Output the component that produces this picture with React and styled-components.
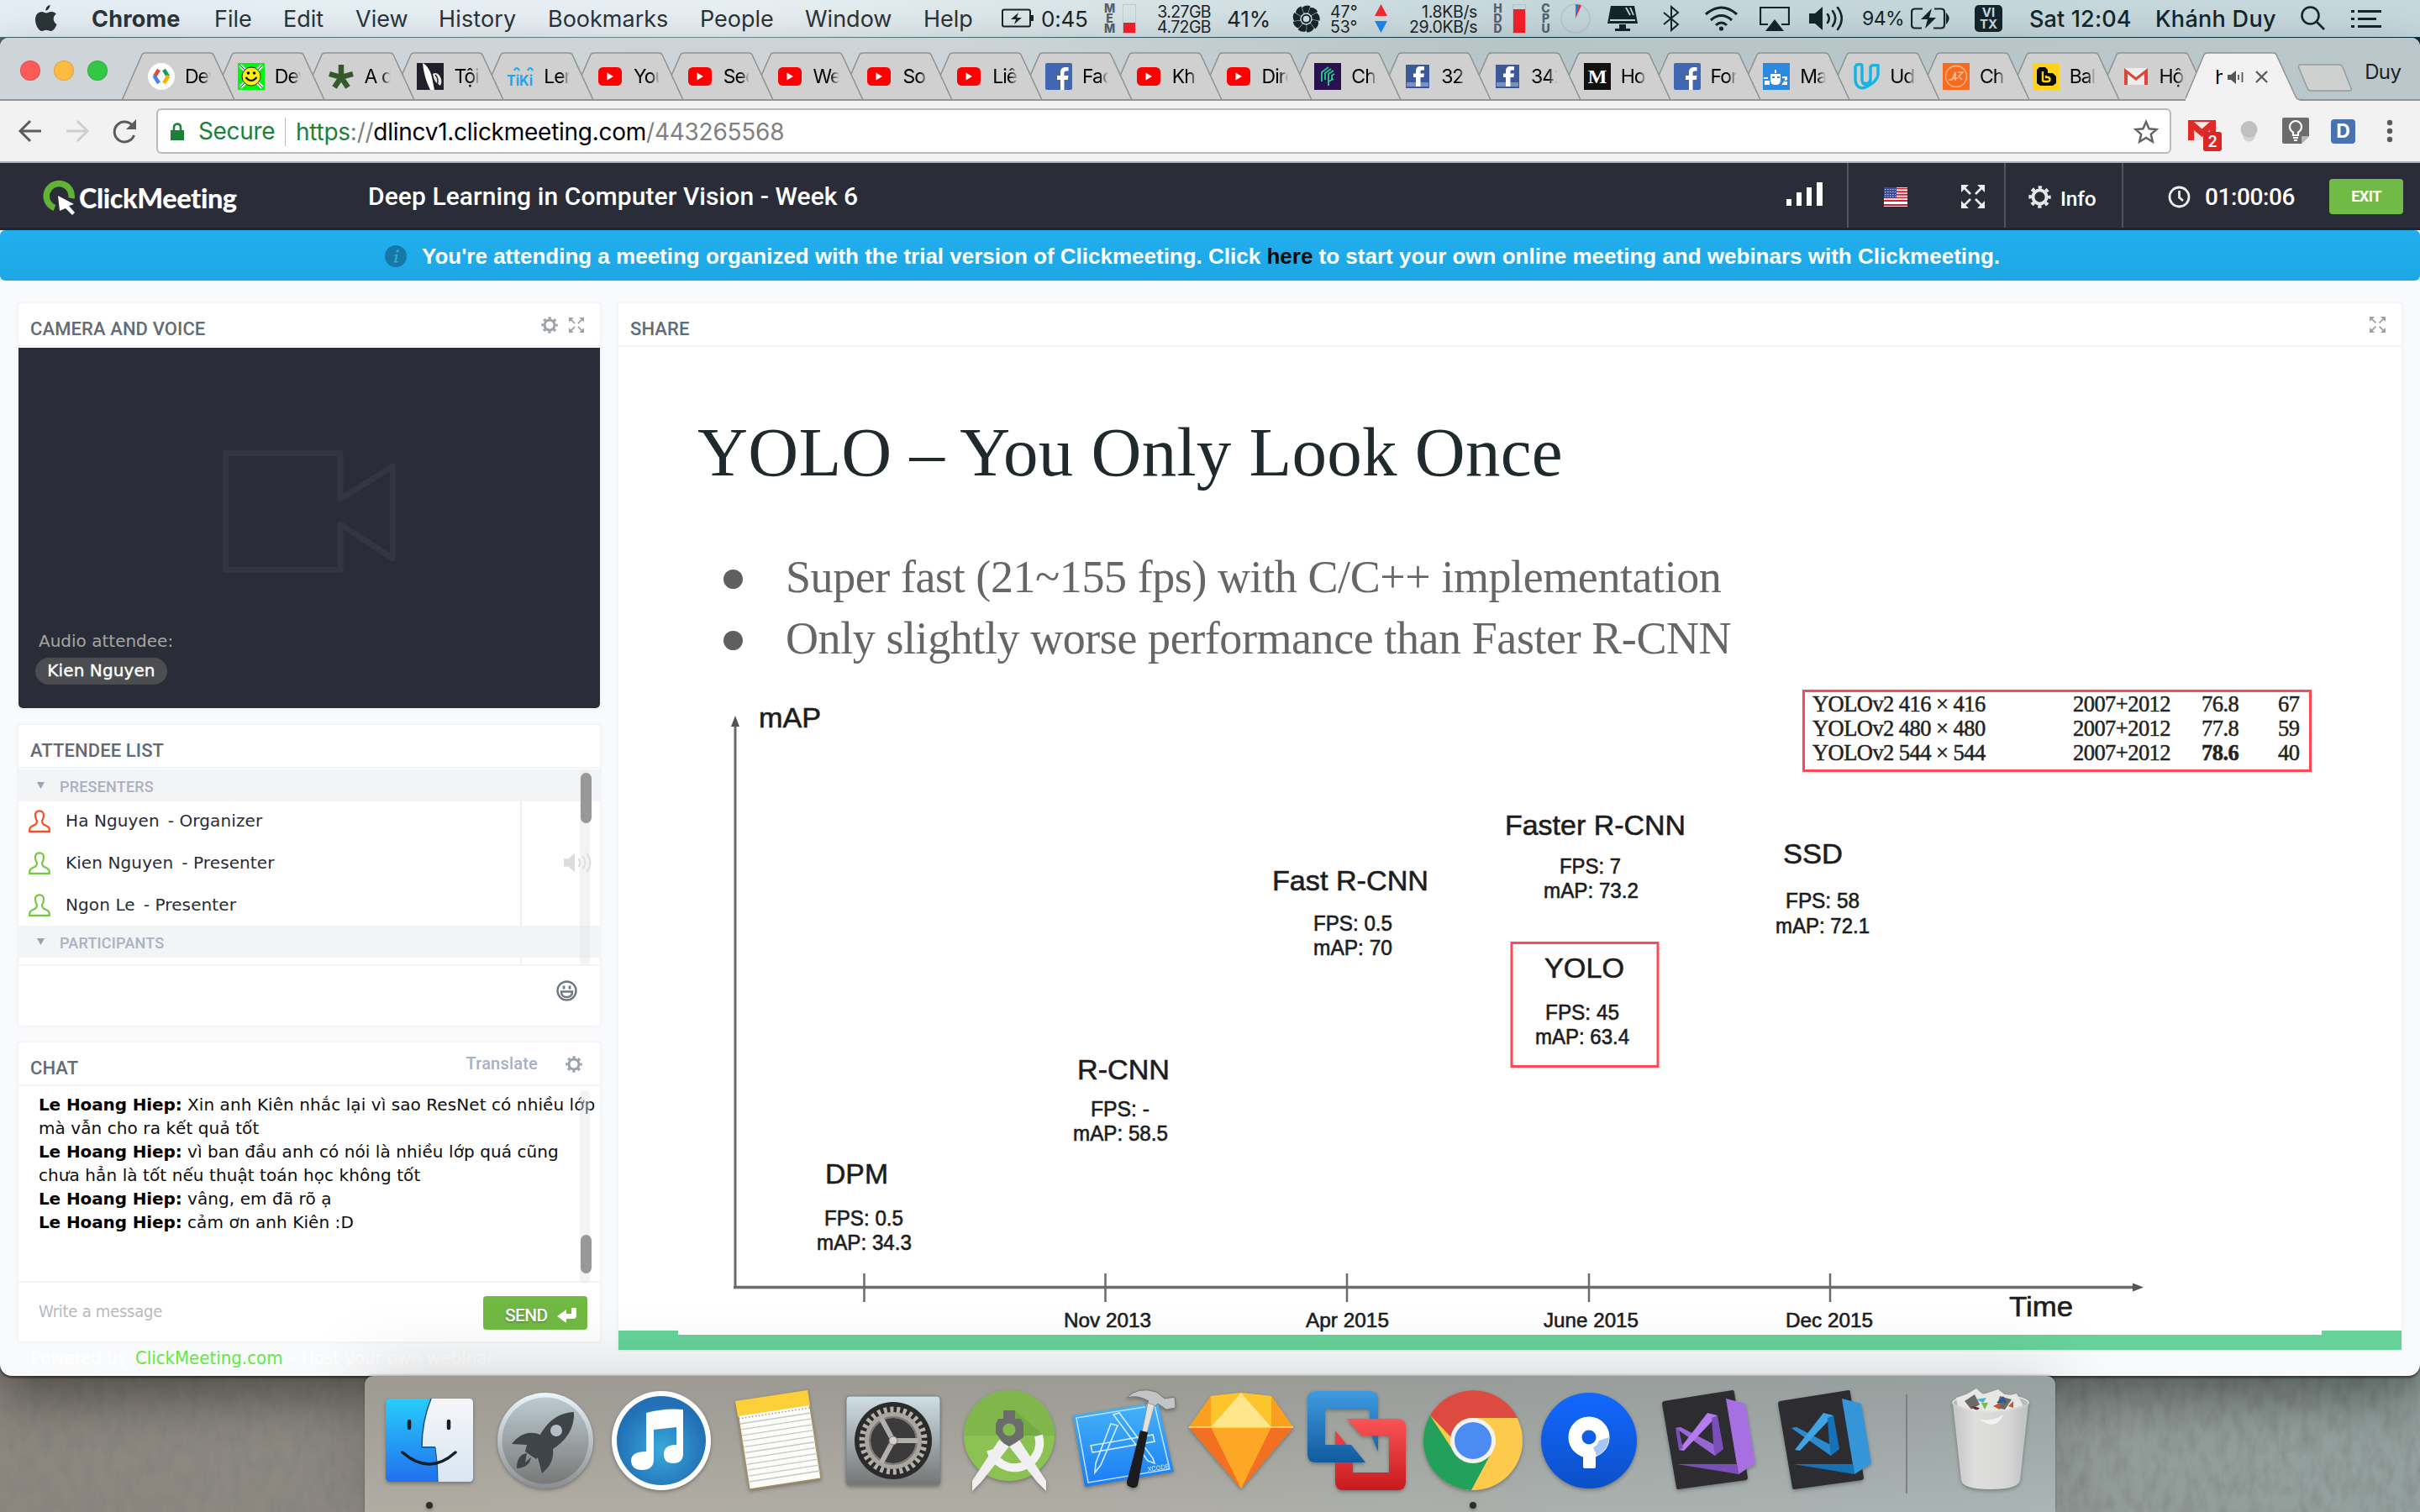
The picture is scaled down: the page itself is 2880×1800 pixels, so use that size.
import React from 'react';
import styled, { createGlobalStyle } from 'styled-components';

const UI = `Inter, "Noto Sans", sans-serif`;
const ROBOTO = `Roboto, "Noto Sans", sans-serif`;
const VERDANA = `"DejaVu Sans", sans-serif`;
const ARIAL = `"Liberation Sans", Arial, sans-serif`;
const TIMES = `"Liberation Serif", "Times New Roman", serif`;

const GlobalStyle = createGlobalStyle`
  * { box-sizing: border-box; }
  body { margin: 0; }
  h1, h2, h3, ul, p { margin: 0; padding: 0; font-weight: inherit; }
  ul { list-style: none; }
  svg { display: block; flex: none; }
`;

/* ---------- desktop ---------- */

const Desktop = styled.div`
  width: 2880px;
  height: 1800px;
  overflow: hidden;
  position: relative;
  isolation: isolate;
  display: flex;
  flex-direction: column;
  background: linear-gradient(90deg, #4b6670 0%, #7a969c 30%, #0c3a45 60%, #06303c 100%) 0 0 / 100% 200px no-repeat,
    linear-gradient(90deg, #8c867e 0%, #8f8f8a 50%, #93a19e 100%);
`;

const Wood = styled.svg`
  position: absolute;
  left: 0;
  bottom: 0;
  z-index: -1;
`;

/* ---------- menu bar ---------- */

const MenuBar = styled.div`
  height: 44px;
  flex: none;
  padding-left: 42px;
  display: flex;
  align-items: center;
  font-family: ${UI};
  font-size: 27px;
  color: #2b3438;
  white-space: nowrap;
  background: linear-gradient(90deg, #e3edf3 0%, #e8eff3 30%, #d3e1e4 50%, #c3d6da 65%, #c6d8dc 100%);
`;

const Slot = styled.div`
  width: ${(p) => p.$w}px;
  height: 44px;
  flex: none;
  display: flex;
  align-items: center;
  font-size: ${(p) => p.$size || 27}px;
  font-weight: ${(p) => p.$weight || 400};
  letter-spacing: ${(p) => p.$ls || 0}px;
  color: ${(p) => p.$color || 'inherit'};
`;

const Stack = styled.div`
  width: ${(p) => p.$w}px;
  font-size: 19.5px;
  line-height: 18px;
  letter-spacing: ${(p) => p.$ls || 0}px;
  color: #1c2528;
  text-align: right;
  padding-top: 1px;
`;

const TinyLabel = styled.div`
  width: 17px;
  font: 800 14px/12px ${UI};
  color: #56626a;
  text-align: center;
`;

const Meter = styled.div`
  width: 16px;
  height: 35px;
  border: 1px solid rgba(120, 140, 145, 0.25);
  display: flex;
  align-items: flex-end;
`;

const MeterFill = styled.div`
  width: 100%;
  height: ${(p) => p.$h}px;
  background: #f4222a;
`;

const InputBadge = styled.div`
  width: 33px;
  height: 32px;
  border-radius: 5px;
  background: #14262b;
  color: #c9d9dc;
  font: 700 15px/14px ${UI};
  text-align: center;
  padding-top: 2px;
`;

/* ---------- browser window ---------- */

const BrowserWindow = styled.div`
  height: 1593px;
  margin-top: 1px;
  flex: none;
  border-radius: 10px 10px 14px 14px;
  overflow: hidden;
  display: flex;
  flex-direction: column;
  background: #f9fafc;
  box-shadow: 0 2px 3px rgba(0, 0, 0, 0.55), 0 26px 60px rgba(0, 0, 0, 0.42);
`;

const TabStrip = styled.div`
  height: 75px;
  flex: none;
  display: flex;
  align-items: flex-end;
  padding-left: 24px;
  position: relative;
  border-bottom: 2px solid #929596;
  background: linear-gradient(90deg, #cfd4d8 0%, #ccd4d7 40%, #b6c5c8 62%, #bbc8cb 100%);
`;

const Lights = styled.div`
  display: flex;
  gap: 16px;
  width: 121px;
  height: 73px;
  padding-top: 27px;
`;

const Light = styled.span`
  width: 24px;
  height: 24px;
  border-radius: 50%;
  background: ${(p) => p.$c};
  box-shadow: inset 0 0 0 1px rgba(0, 0, 0, 0.12);
`;

const TabBox = styled.div`
  width: 106.8px;
  flex: none;
  position: relative;
  display: flex;
  align-items: center;
  padding: 1px 0 0 31px;
  z-index: ${(p) => p.$z};
  margin-bottom: ${(p) => (p.$active ? '-2px' : '0')};
  height: ${(p) => (p.$active ? '58px' : '56px')};
`;

const TabShape = styled.svg`
  position: absolute;
  left: 0;
  bottom: 0;
  z-index: -1;
`;

const TabText = styled.span`
  width: 31px;
  margin-left: 12px;
  overflow: hidden;
  white-space: nowrap;
  font: 400 23px/34px ${UI};
  letter-spacing: -1px;
  color: #000;
  mask-image: linear-gradient(90deg, #000 65%, transparent 100%);
`;

const ActiveText = styled.span`
  width: 9px;
  overflow: hidden;
  font: 400 23px/34px ${UI};
  color: #000;
`;

const ActiveInner = styled.div`
  display: flex;
  align-items: center;
  padding-left: 4px;
  svg { margin-left: 6px; }
  svg + svg { margin-left: 14px; }
`;

const NewTab = styled.svg`
  margin: 0 0 9px 26px;
`;

const Profile = styled.div`
  font: 400 24px/30px ${UI};
  letter-spacing: -0.6px;
  color: #1c2224;
  margin: 0 0 17px 14px;
`;

const Toolbar = styled.div`
  height: 74px;
  flex: none;
  display: flex;
  align-items: center;
  padding: 0 0 0 18px;
  background: #f2f2f2;
  border-bottom: 2px solid #b3b3b5;
`;

const NavIcon = styled.div`
  width: 56px;
  display: flex;
`;

const Omnibox = styled.div`
  width: 2398px;
  height: 54px;
  flex: none;
  border: 2px solid #b9b9b9;
  border-radius: 6px;
  background: #fff;
  display: flex;
  align-items: center;
  padding: 1px 13px 0 15px;
  font: 400 28px/49px ${UI};
  white-space: nowrap;
`;

const Secure = styled.span`
  width: 103px;
  margin-left: 17px;
  letter-spacing: -0.35px;
  color: #1d8038;
`;

const Url = styled.span`
  border-left: 1px solid #bbb;
  line-height: 34px;
  padding-left: 12px;
  flex: 1;
  letter-spacing: -0.26px;
  color: #808080;
  em { font-style: normal; color: #1d8038; }
  b { font-weight: 400; color: #000; }
`;

const Extensions = styled.div`
  display: flex;
  align-items: center;
  flex: 1;
  padding-left: 20px;
`;

const ExtSlot = styled.div`
  width: ${(p) => p.$w}px;
  position: relative;
`;

const CountBadge = styled.span`
  position: absolute;
  left: 18px;
  top: 14px;
  width: 22px;
  height: 23px;
  border-radius: 3px;
  background: #dc2626;
  color: #fff;
  font: 600 18px/23px ${UI};
  text-align: center;
`;

const LetterBadge = styled.span`
  display: block;
  width: 29px;
  height: 29px;
  border-radius: 4px;
  background: #4a72b0;
  color: #fff;
  font: 700 23px/29px ${UI};
  text-align: center;
`;

/* ---------- meeting app ---------- */

const AppHeader = styled.header`
  height: 80px;
  flex: none;
  display: flex;
  align-items: center;
  background: #2a2d38;
  border-bottom: 3px solid #23252e;
  color: #fff;
  font-family: ${ROBOTO};
  font-weight: 500;
  white-space: nowrap;
`;

const Brand = styled.div`
  width: 438px;
  padding-left: 51px;
  display: flex;
  align-items: center;
  > svg { margin-top: 4px; }
`;

const BrandName = styled.span`
  margin: 6px 0 0 4px;
  font: 900 32.5px/40px Lato, sans-serif;
  letter-spacing: -0.45px;
`;

const MeetingTitle = styled.h1`
  font-size: 30px;
  line-height: 78px;
  padding-top: 2px;
  letter-spacing: 0.08px;
  flex: 1;
`;

const HeadCell = styled.div`
  width: ${(p) => p.$w}px;
  height: 77px;
  display: flex;
  align-items: center;
  gap: ${(p) => p.$gap || 0}px;
  padding: 3px 0 0 ${(p) => p.$pl}px;
  border-left: ${(p) => (p.$plain ? '0' : '2px solid #51545e')};
`;

const InfoText = styled.span`
  font-size: 24.5px;
  letter-spacing: -0.2px;
  margin: 4px 0 0 11px;
`;

const Elapsed = styled.strong`
  font-size: 28px;
  font-weight: 500;
  letter-spacing: -0.4px;
  width: 109px;
  margin: 0 39px 0 17px;
`;

const ExitButton = styled.button`
  width: 88px;
  height: 42px;
  border: 0;
  border-radius: 4px;
  background: #70ba45;
  color: #fff;
  font: 700 18px/42px ${ROBOTO};
  letter-spacing: -0.5px;
  padding: 0;
`;

const Notice = styled.div`
  height: 60px;
  flex: none;
  display: flex;
  align-items: center;
  padding: 1px 0 0 458px;
  border-radius: 6px;
  background: linear-gradient(#22aeec, #1ba8e5);
  color: #fff;
  font: 700 26px/60px ${ARIAL};
  white-space: nowrap;
  svg { margin-right: 18px; }
  b { color: #0b0b0b; }
`;

const Body = styled.main`
  flex: 1;
  padding: 25px 0 0 20px;
  display: flex;
  gap: 18px;
`;

const SideColumn = styled.div`
  width: 696px;
  display: flex;
  flex-direction: column;
  gap: 16px;
`;

const Panel = styled.section`
  width: ${(p) => p.$w || 696}px;
  height: ${(p) => p.$h}px;
  flex: none;
  border: 2px solid #f2f4f7;
  border-radius: 4px;
  background: #fff;
  display: flex;
  flex-direction: column;
`;

const PanelHead = styled.div`
  height: 52px;
  flex: none;
  display: flex;
  align-items: center;
  border-bottom: 2px solid #f2f4f6;
  padding: 1px ${(p) => p.$pr || 19}px 0 14px;
  svg { margin-left: 13px; }
`;

const PanelTitle = styled.h2`
  flex: 1;
  padding-top: 11px;
  font: 500 22px/26px ${ROBOTO};
  letter-spacing: 0.1px;
  color: #626b76;
`;

const Translate = styled.span`
  font: 500 20px/24px ${ROBOTO};
  color: #a9afc2;
  margin: 0 20px 1px 0;
  letter-spacing: 0.2px;
`;

const CameraView = styled.div`
  flex: 1;
  margin-top: 1px;
  border-radius: 0 0 5px 5px;
  background: #2a2d38;
  display: flex;
  flex-direction: column;
  align-items: flex-start;
  font: 400 20px/28px ${VERDANA};
  > svg { margin: 120px 0 0 241px; }
`;

const AudioLabel = styled.p`
  margin: 65px 0 0 24px;
  color: #a6a6a3;
`;

const NamePill = styled.span`
  margin: 6px 0 0 20px;
  height: 32px;
  width: 157px;
  border-radius: 16px;
  background: #4c4d50;
  color: #fff;
  line-height: 30px;
  text-align: center;
  letter-spacing: 0.1px;
  -webkit-text-stroke: 0.4px #fff;
`;

const AttendeeList = styled.div`
  height: 234px;
  margin-top: 1px;
  overflow: hidden;
  position: relative;
  border-bottom: 2px solid #f3f4f6;
`;

const GroupRow = styled.h3`
  height: 38px;
  background: #f3f4f6;
  display: flex;
  align-items: center;
  padding: 3px 0 0 22px;
  font: 500 18px/35px ${ROBOTO};
  color: #abb1c1;
  svg { margin: 0 18px 3px 0; }
  letter-spacing: 0.2px;
`;

const Attendee = styled.div`
  height: ${(p) => p.$h}px;
  display: flex;
  font: 400 20px/47px ${VERDANA};
  letter-spacing: 0.1px;
  color: #282c36;
  white-space: nowrap;
`;

const AttendeeMain = styled.div`
  width: 599px;
  padding-left: 12px;
  border-right: 2px solid #eef0f2;
  display: flex;
  svg { margin: 10px 18px 0 0; }
`;

const Role = styled.span`
  margin-left: 10px;
`;

const AttendeeAudio = styled.div`
  padding: 10px 0 0 50px;
`;

const Track = styled.div`
  position: absolute;
  right: 12px;
  top: ${(p) => p.$top}px;
  width: 12px;
  height: ${(p) => p.$h}px;
  border-radius: 6px;
  background: rgba(225, 227, 229, 0.42);
`;

const Thumb = styled.div`
  width: 13px;
  height: ${(p) => p.$h}px;
  margin: ${(p) => p.$y}px 0 0 1px;
  border-radius: 7px;
  background: #989898;
`;

const StatusBar = styled.div`
  flex: 1;
  display: flex;
  justify-content: flex-end;
  padding: 17px 27px 0 0;
`;

const Messages = styled.div`
  height: 234px;
  flex: none;
  position: relative;
  padding: 8px 0 0 24px;
  border-bottom: 2px solid #f3f4f6;
  font: 400 20px/28px ${VERDANA};
  letter-spacing: 0.08px;
  color: #0c0c0c;
  white-space: nowrap;
  b { color: #000; letter-spacing: -0.12px; }
`;

const Compose = styled.div`
  flex: 1;
  display: flex;
  align-items: center;
  justify-content: space-between;
  padding: 2px 15px 0 24px;
`;

const Placeholder = styled.span`
  font: 400 20px/28px "DejaVu Sans Condensed", "DejaVu Sans", sans-serif;
  font-stretch: condensed;
  letter-spacing: -0.25px;
  color: #b8b9ba;
  align-self: flex-start;
  margin-top: 18px;
`;

const SendButton = styled.button`
  width: 124px;
  height: 40px;
  border: 0;
  border-radius: 4px;
  background: #72b944;
  color: #fff;
  display: flex;
  align-items: center;
  padding: 5px 0 0 26px;
  font: 500 21px/34px ${ROBOTO};
  letter-spacing: -0.7px;
  text-shadow: 0 1px 2px rgba(0, 0, 0, 0.35);
  svg { margin-left: 12px; }
`;

const Powered = styled.p`
  padding-left: 17px;
  margin-top: -12px;
  font: 400 22px/28px "DejaVu Sans Condensed", "DejaVu Sans", sans-serif;
  font-stretch: condensed;
  color: #fff;
  white-space: nowrap;
  a { color: #62e83e; margin: 0 3px; }
`;

/* ---------- shared slide ---------- */

const Slide = styled.div`
  height: 1194px;
  padding-top: 75px;
  background: #fff;
  position: relative;
`;

const SlideTitle = styled.h1`
  padding-left: 94px;
  font: 400 83px/100px ${TIMES};
  letter-spacing: 0.25px;
  color: #202a2d;
`;

const Bullets = styled.ul`
  margin-top: 63px;
`;

const Bullet = styled.li`
  height: 73px;
  padding-left: 125px;
  display: flex;
  align-items: center;
  gap: 51px;
  font: 400 54px/73px ${TIMES};
  letter-spacing: -0.42px;
  color: #666;
  white-space: nowrap;
  &::before {
    content: '';
    width: 23px;
    height: 23px;
    border-radius: 50%;
    background: #5f5f5f;
    margin-top: 3px;
  }
`;

const ChartSvg = styled.svg`
  margin-top: 23px;
  font-family: ${ARIAL};
  fill: #1d1d1d;
`;

const Callout = styled.div`
  position: absolute;
  left: 1409px;
  top: 408px;
  width: 606px;
  height: 98px;
  border: 3px solid #fb4a53;
  padding: 0 0 0 9px;
  display: grid;
  grid-template-columns: 310px 153px 91px 30px;
  grid-auto-rows: 29px;
  font: 400 26.5px/29px ${TIMES};
  letter-spacing: -0.55px;
  color: #222;
  white-space: nowrap;
  -webkit-text-stroke: 0.5px #222;
`;

const SlideFooter = styled.svg`
  position: absolute;
  left: 0;
  bottom: 0;
`;

/* ---------- dock ---------- */

const Dock = styled.div`
  width: 2012px;
  height: 162px;
  flex: none;
  margin-left: 434px;
  padding-left: 8px;
  border-radius: 10px 10px 0 0;
  display: flex;
  position: relative;
  background: linear-gradient(180deg, rgba(120, 122, 118, 0.35), rgba(180, 178, 170, 0.12)),
    linear-gradient(90deg, #b0aba1 0%, #aeaca4 45%, #a9b0ae 70%, #a8b5b6 100%);
  box-shadow: 0 0 90px rgba(0, 0, 0, 0.17), 0 -1px 3px rgba(0, 0, 0, 0.28);
`;

const Divider = styled.div`
  width: 2px;
  height: 118px;
  margin: 22px 30px 0 32px;
  background: #7b8080;
`;

/* ---------- drawings ---------- */

const Gear = ({ s = 20, c = '#9aa1a8' }) => (
  <svg width={s} height={s} viewBox="0 0 26 26" fill="none" stroke={c}>
    <circle cx="13" cy="13" r="7.8" strokeWidth="3.8" />
    <circle cx="13" cy="13" r="11" strokeWidth="3.4" strokeDasharray="4.2 4.44" strokeDashoffset="2.1" />
  </svg>
);

const Expand = ({ s = 18, c = '#9aa1a8' }) => (
  <svg width={s} height={s} viewBox="0 0 28 28" fill={c} stroke={c} strokeWidth="2.6">
    <path d="M3 3 11 11M25 3 17 11M3 25 11 17M25 25 17 17" />
    <path stroke="none" d="M0 0h9L0 9zM28 0v9l-9-9zM0 28v-9l9 9zM28 28h-9l9-9z" />
  </svg>
);

const Person = ({ c }) => (
  <svg width="26" height="27" viewBox="0 0 26 27" fill="none" stroke={c} strokeWidth="2.2">
    <path d="M13 1.3c-3.6 0-5 2.4-5 5.4 0 3.4 1 5 2 6.6 0 2-.4 3.4-2 4.4-3.4 1.6-6.800 2.200-6.800 5.800v2.300h23.600v-2.300c0-3.600-3.400-4.200-6.800-5.800-1.600-1-2-2.400-2-4.400 1-1.600 2-3.200 2-6.600 0-3-1.400-5.400-5-5.400z" />
  </svg>
);

const Speaker = ({ w = 34, h = 26, c = '#dcdcdc' }) => (
  <svg width={w} height={h} viewBox="0 0 42 30" fill="none" stroke={c} strokeWidth="2.6" strokeLinecap="round">
    <path d="M0 9h7l9-8v28l-9-8H0z" fill={c} stroke="none" />
    <path d="M22 10q3.500 5 0 10M28 6q6.500 9 0 18M34 2q9.500 13 0 26" />
  </svg>
);

const Triangle = () => (
  <svg width="9" height="8" viewBox="0 0 9 8"><path d="M0 0h9L4.500 8z" fill="#9aa1b4" /></svg>
);

const YouTube = () => (
  <g><rect x="2" y="5" width="28" height="22" rx="5.500" fill="#fe0000" /><path d="M12.500 11.500v9l7.500-4.500z" fill="#fff" /></g>
);
const FacebookBig = () => (
  <g><rect width="32" height="32" rx="2" fill="#4267b2" /><path d="M18 32V20h-4v-5h4v-4c0-4 2.500-6 6-6h3.500v4.500H25c-2 0-2.500 1-2.500 2.500v3h5l-.7 5h-4.300v12z" fill="#fff" /></g>
);
const FacebookSmall = () => (
  <g><rect x="2" y="2" width="28" height="28" fill="#3b5998" /><rect x="3" y="23" width="26" height="5" fill="#7d91bf" /><path d="M14 28V17h-3v-4.500h3V9.500c0-3.500 2-5.500 5.500-5.500H24v4.500h-2.500c-1.600 0-2 .8-2 2v2H24l-.7 4.500h-3.800v11z" fill="#fff" /></g>
);

const FAVICONS = {
  dev: <g><circle cx="16" cy="16" r="16" fill="#fff" /><g fill="none" strokeWidth="4.500"><path d="M13 8 8 16" stroke="#e8453c" /><path d="M7.500 15l5.500 9" stroke="#4285f4" /><path d="M19 8l5 8" stroke="#0f9d58" /><path d="M24.500 15 19 24" stroke="#f4b400" /></g></g>,
  smile: <g><rect width="32" height="32" fill="#00f513" /><path d="M3 3l26 26M29 3 3 29" stroke="#fff" strokeWidth="4" /><path d="M3 3l26 26M29 3 3 29" stroke="#333" strokeWidth="1" /><circle cx="16" cy="16" r="11" fill="#ffee10" stroke="#222" strokeWidth="1" /><path d="M9.500 17q6.500 8 13 0" fill="none" stroke="#111" strokeWidth="2" /><circle cx="12.500" cy="12" r="1.800" /><circle cx="19.500" cy="12" r="1.800" /></g>,
  star: <path d="M16 17V2M16 17 2 13M16 17 30 13M16 17 8 29M16 17l8 12" stroke="#335a28" strokeWidth="6.500" />,
  wing: <g><rect width="32" height="32" fill="#20202a" /><path d="M7 0c5 3 9 8 11 17l3 15h-5C12 24 8 12 7 0z" fill="#fff" /><path d="M19 13c3-2 6-1 8 2 3 4 3 9 1 12l-4-3c-3-2-4-7-5-11z" fill="#e8e8ea" /><path d="M22 14c3 3 4 8 2 12" stroke="#20202a" strokeWidth="1.500" fill="none" /></g>,
  tiki: <g><text x="0" y="27" textLength="31" lengthAdjust="spacingAndGlyphs" fontFamily="Inter, sans-serif" fontWeight="700" fontSize="17" fill="#19a9f0">TiKi</text><path d="M9 9q3-6 6 0M25 9q3-6 6 0" stroke="#19a9f0" strokeWidth="2.200" fill="none" /></g>,
  yt: <YouTube />,
  fb: <FacebookBig />,
  fbs: <FacebookSmall />,
  purple: <g><rect width="32" height="32" fill="#2c1150" /><path d="M9 22V11l8-6M13 20v-8l7-5M17 27V13l6-4M21 20v-5l3-2M17 22l6-3" stroke="#27c888" strokeWidth="1.900" fill="none" /></g>,
  medium: <g><rect width="32" height="32" fill="#111" /><text x="16" y="24" textAnchor="middle" fontFamily="Liberation Serif, serif" fontWeight="700" fontSize="24" fill="#fff">M</text></g>,
  robot: <g><rect width="32" height="32" fill="#2b8ae0" /><path d="M9 13h12v8q0 5-6 5t-6-5zM2 21h6v5H2zM24 22h5v4h-7l4-5v-3h-3v-2h6v4zM14 8h2v4h-2zM1 17h5v2H1z" fill="#fff" /><path d="M11 17h3M17 17h3" stroke="#2b8ae0" strokeWidth="2" /></g>,
  udacity: <path d="M3 3c4-2 8-2 8 0v16c0 6 3 8 7 6M3 3v16c0 10 7 13 14 9 6-3 12-8 13-14V3c-5-1-9 0-9 2v14c0 5-4 7-10 4" fill="none" stroke="#14b4e6" strokeWidth="3.400" />,
  orange: <g><rect width="32" height="32" fill="#f66c20" /><circle cx="16" cy="16" r="12.500" fill="none" stroke="#ffc29a" strokeWidth="1.300" /><path d="M7 20h4l4-9v10M12 18h6M18 11h6l-5 5 4 4" stroke="#ffc29a" strokeWidth="1.400" fill="none" /></g>,
  yellow: <g><rect width="32" height="32" fill="#ffd31a" /><path d="M8 5h7l3 3v4h6l4 4v8l-4 3H9l-4-3V8z" fill="#0b0b0b" /><path d="M12 10v10q0 2 2 2h4q2.500 0 2.500-2.500T18 17h-2v-2" stroke="#ffd31a" strokeWidth="2.400" fill="none" /></g>,
  gmail: <g><path d="M2 6h28v20H2z" fill="#ededed" /><path d="M2 26V6l14 11L30 6v20h-4V13L16 21 6 13v13z" fill="#db4638" /></g>,
};

const TABS = [
  ['dev', 'Dev'], ['smile', 'Dev'], ['star', 'A do'], ['wing', 'Tội'], ['tiki', 'Len'], ['yt', 'You'],
  ['yt', 'Sec'], ['yt', 'Wel'], ['yt', 'So'], ['yt', 'Liên'], ['fb', 'Fac'], ['yt', 'Kh'],
  ['yt', 'Dire'], ['purple', 'Cha'], ['fbs', '32 '], ['fbs', '342'], ['medium', 'Ho'], ['fb', 'For'],
  ['robot', 'Mac'], ['udacity', 'Uda'], ['orange', 'Ch'], ['yellow', 'Bal'], ['gmail', 'Hộp'],
];

const Tab = ({ icon, label, z }) => (
  <TabBox $z={z}>
    <TabShape width="136" height="56" viewBox="0 0 136 56">
      <path d="M0.500 56.500 24 3Q25 1 28 1H105Q108 1 109 3L134 57" fill="#d0d0d0" stroke="#8e9192" strokeWidth="1.500" />
    </TabShape>
    <svg width="32" height="32" viewBox="0 0 32 32">{FAVICONS[icon]}</svg>
    <TabText>{label}</TabText>
  </TabBox>
);

const Fan = () => (
  <svg width="33" height="33" viewBox="-16.500 -16.500 33 33">
    {[0, 1, 2, 3, 4, 5, 6, 7, 8].map((i) => (
      <path key={i} d="M-2.800 -7 -5 -13.500Q-1 -17.500 5 -15.300L1.800 -7z" transform={`rotate(${i * 40})`} fill="#17262a" />
    ))}
    <circle r="4.800" fill="none" stroke="#17262a" strokeWidth="2" />
  </svg>
);

const SystemMenu = () => {
  const ink = '#14262b';
  return (
    <MenuBar>
      <Slot $w={67}>
        <svg width="26" height="32" viewBox="0 0 26 32" fill="#2b3438"><path d="M17.500 0c.2 3-2.300 6.400-5.200 6.600C12 3.700 14.700.4 17.500 0zM25.500 23c-1.500 4-4 8-7 8-2 0-3-1.200-5.300-1.200S9.800 31 8 31C4 31 0 23.500 0 17.500 0 11.500 3.700 8 7.500 8c2.300 0 4 1.400 5.600 1.400C14.700 9.400 16.600 7.800 19.600 8c2 0 4 1 5.200 2.800-4.600 2.800-3.800 9.600.7 12.200z" /></svg>
      </Slot>
      <Slot $w={146} $weight={700} $ls={0.2}>Chrome</Slot>
      <Slot $w={82}>File</Slot>
      <Slot $w={86}>Edit</Slot>
      <Slot $w={99}>View</Slot>
      <Slot $w={130} $ls={0.15}>History</Slot>
      <Slot $w={181}>Bookmarks</Slot>
      <Slot $w={125}>People</Slot>
      <Slot $w={141}>Window</Slot>
      <Slot $w={93}>Help</Slot>
      <Slot $w={47}>
        <svg width="38" height="24" viewBox="0 0 38 24"><rect x="1" y="1.500" width="33" height="20" rx="2" fill="none" stroke="#1c2528" strokeWidth="2" /><path d="M35 8h3v7h-3z" fill="#1c2528" /><path d="M20 5 11 13h6l-2 6 9-8h-6z" fill="#1c2528" /></svg>
      </Slot>
      <Slot $w={73} $size={26} $ls={-0.2} $color="#1c2528">0:45</Slot>
      <Slot $w={24}><TinyLabel>M<br />E<br />M</TinyLabel></Slot>
      <Slot $w={39}><Meter><MeterFill $h={12} /></Meter></Slot>
      <Slot $w={85}><Stack $w={66} $ls={-0.6}>3.27GB<br />4.72GB</Stack></Slot>
      <Slot $w={78} $size={26} $ls={-0.1} $color="#1c2528">41%</Slot>
      <Slot $w={45}><Fan /></Slot>
      <Slot $w={53}><Stack $w={31}>47°<br />53°</Stack></Slot>
      <Slot $w={41}><svg width="15" height="34" viewBox="0 0 15 34"><path d="M7.500 0 15 14H0z" fill="#f2292c" /><path d="M0 20h15L7.500 34z" fill="#1c86ee" /></svg></Slot>
      <Slot $w={97}><Stack $w={81} $ls={-0.35}>1.8KB/s<br />29.0KB/s</Stack></Slot>
      <Slot $w={26}><TinyLabel>H<br />D<br />D</TinyLabel></Slot>
      <Slot $w={31}><Meter><MeterFill $h={28} /></Meter></Slot>
      <Slot $w={26}><TinyLabel>C<br />P<br />U</TinyLabel></Slot>
      <Slot $w={56}><svg width="36" height="36" viewBox="0 0 36 36"><circle cx="18" cy="18" r="17" fill="none" stroke="#b4c5c9" strokeWidth="1.500" /><path d="M18 18V1q3 0 5 1z" fill="#1c86ee" /><path d="M18 18 22 1.500l3 1z" fill="#f2292c" /></svg></Slot>
      <Slot $w={66}><svg width="36" height="30" viewBox="0 0 36 30" fill={ink}><path d="M4 0h28l4 21H0zM14 22h8v5h5v3H9v-3h5z" /><path d="M22 2l5 9M27 2l4 9M3 17h30" stroke="#c5d7db" strokeWidth="1.800" /></svg></Slot>
      <Slot $w={49}><svg width="20" height="32" viewBox="0 0 20 32" fill="none" stroke={ink} strokeWidth="2"><path d="M1 9l17 14-8 7V2l8 7L1 23" /></svg></Slot>
      <Slot $w={66}><svg width="41" height="30" viewBox="0 0 41 30" fill="none" stroke={ink} strokeWidth="3"><path d="M2 10q18.500-16 37 0M8 17q12.500-11 25 0M14 23q6.500-6 13 0" /><circle cx="20.500" cy="27" r="2.600" fill={ink} stroke="none" /></svg></Slot>
      <Slot $w={59}><svg width="36" height="29" viewBox="0 0 36 29" fill="none" stroke={ink} strokeWidth="2.200"><path d="M10 21H1V1h34v20h-9" /><path d="M18 15l11 14H7z" fill={ink} stroke="none" /></svg></Slot>
      <Slot $w={63}><Speaker w={42} h={30} c={ink} /></Slot>
      <Slot $w={58} $size={23} $ls={-0.6} $color={ink}>94%</Slot>
      <Slot $w={76}><svg width="46" height="26" viewBox="0 0 46 26" fill="none" stroke={ink} strokeWidth="2.200"><path d="M14 1.500H5q-4 0-4 4v15q0 4 4 4h8M28 1.500h8q4 0 4 4v15q0 4-4 4h-9" /><path d="M43 9q3 4 0 8z" fill={ink} /><path d="M25 1 12 14h8l-3 11 13-13h-8z" fill={ink} stroke="none" /></svg></Slot>
      <Slot $w={65}><InputBadge>VI<br />TX</InputBadge></Slot>
      <Slot $w={150} $color={ink} $weight={500} $ls={0.15}>Sat 12:04</Slot>
      <Slot $w={173} $color={ink} $weight={500} $ls={0.3}>Khánh Duy</Slot>
      <Slot $w={60}><svg width="30" height="30" viewBox="0 0 30 30" fill="none" stroke={ink} strokeWidth="2.600"><circle cx="11.500" cy="11.500" r="10" /><path d="M19 19l9 9" /></svg></Slot>
      <Slot $w={40}><svg width="36" height="21" viewBox="0 0 36 21" fill={ink}><path d="M0 0h4v3H0zM8 0h28v3H8zM0 9h4v3H0zM8 9h22v3H8zM0 18h4v3H0zM8 18h28v3H8z" /></svg></Slot>
    </MenuBar>
  );
};

const Chrome = () => (
  <>
    <TabStrip>
      <Lights><Light $c="#fc5b57" /><Light $c="#fdbc40" /><Light $c="#33c748" /></Lights>
      {TABS.map(([icon, label], i) => <Tab key={i} icon={icon} label={label} z={30 - i} />)}
      <TabBox $z={40} $active>
        <TabShape width="138" height="58" viewBox="0 0 138 58">
          <path d="M-4 59Q-1 57 1 53L22 3Q23 1 26 1H104Q107 1 108 3L131 53Q133 57 137 57V59z" fill="#f2f2f2" stroke="#8e9192" strokeWidth="1.500" />
          <path d="M2 56.500h130V58H2z" fill="#f2f2f2" />
        </TabShape>
        <ActiveInner>
          <ActiveText>h</ActiveText>
          <svg width="19" height="18" viewBox="0 0 19 18" fill="none" stroke="#555" strokeWidth="1.800"><path d="M0 6h4l6-5v16l-6-5H0z" fill="#555" stroke="none" /><path d="M13 6v6M17.500 3v12" /></svg>
          <svg width="15" height="15" viewBox="0 0 15 15" stroke="#5a5a5a" strokeWidth="2.400"><path d="M1 1l13 13M14 1 1 14" /></svg>
        </ActiveInner>
      </TabBox>
      <NewTab width="66" height="33" viewBox="0 0 66 33">
        <path d="M4 1H50Q53 1 54 4L64 29Q65 32 62 32H16Q13 32 12 29L1.500 4Q1 1 4 1z" fill="#cfd0d0" stroke="#989b9c" strokeWidth="1.500" />
      </NewTab>
      <Profile>Duy</Profile>
    </TabStrip>
    <Toolbar>
      <NavIcon><svg width="36" height="30" viewBox="0 0 36 30" fill="none" stroke="#5c5c5c" strokeWidth="3"><path d="M31 15H7M18 3 6 15l12 12" /></svg></NavIcon>
      <NavIcon><svg width="36" height="30" viewBox="0 0 36 30" fill="none" stroke="#cfcfcf" strokeWidth="3"><path d="M5 15h24M18 3l12 12-12 12" /></svg></NavIcon>
      <NavIcon><svg width="36" height="30" viewBox="0 0 36 30" fill="none" stroke="#5c5c5c" strokeWidth="3"><path d="M28 9A12 12 0 1 0 29.500 20" /><path d="M32 1v12H20z" fill="#5c5c5c" stroke="none" /></svg></NavIcon>
      <Omnibox>
        <svg width="16" height="22" viewBox="0 0 16 22"><path d="M0 9h16v12H0z" fill="#1d8038" /><path d="M4 10V6q0-4.500 4-4.500T12 6v4" fill="none" stroke="#1d8038" strokeWidth="2.600" /></svg>
        <Secure>Secure</Secure>
        <Url><em>https</em>://<b>dlincv1.clickmeeting.com</b>/443265568</Url>
        <svg width="30" height="30" viewBox="0 0 30 30" fill="none" stroke="#636363" strokeWidth="2.500"><path d="M15 3l3.600 8.200 8.900.8-6.700 5.900 2 8.800L15 22l-7.800 4.700 2-8.800L2.500 12l8.900-.8z" /></svg>
      </Omnibox>
      <Extensions>
        <ExtSlot $w={62}>
          <svg width="33" height="26" viewBox="0 0 33 26"><rect width="33" height="24" fill="#e9e3e2" /><path d="M0 24V0h33v24h-7V12l-9.500 8L7 12v12z" fill="#df2b28" /><path d="M7 2h19l-9.500 8.500z" fill="#f4e9e8" /></svg>
          <CountBadge>2</CountBadge>
        </ExtSlot>
        <ExtSlot $w={50}><svg width="21" height="26" viewBox="0 0 21 26"><circle cx="10.500" cy="18" r="7.500" fill="#d4d4d4" /><circle cx="10.500" cy="11" r="10" fill="#c0c0c0" /></svg></ExtSlot>
        <ExtSlot $w={58}><svg width="32" height="32" viewBox="0 0 32 32"><path d="M2 0h28q2 0 2 2v20l-9 9H2q-2 0-2-2V2q0-2 2-2z" fill="#6c6c6c" /><path d="M23 31v-9h9z" fill="#b5b5b5" /><path d="M13 21v-3.500q-4-2.500-4-6.500a7 7 0 0 1 14 0q0 4-4 6.500V21zM13 24h6M14 27h4" fill="none" stroke="#fff" strokeWidth="2.200" /></svg></ExtSlot>
        <ExtSlot $w={66}><LetterBadge>D</LetterBadge></ExtSlot>
        <svg width="8" height="28" viewBox="0 0 8 28" fill="#5a5a5a"><circle cx="4" cy="4" r="3.200" /><circle cx="4" cy="14" r="3.200" /><circle cx="4" cy="24" r="3.200" /></svg>
      </Extensions>
    </Toolbar>
  </>
);

const Header = () => (
  <AppHeader>
    <Brand>
      <svg width="39" height="42" viewBox="0 0 39 42">
        <path d="M14 33.500A15 15 0 1 1 34 22" fill="none" stroke="#62b236" strokeWidth="7.500" />
        <path d="M18 19l19 10-6 2 7 8-3 3-8-8-7 3z" fill="#fff" />
      </svg>
      <BrandName>ClickMeeting</BrandName>
    </Brand>
    <MeetingTitle>Deep Learning in Computer Vision - Week 6</MeetingTitle>
    <HeadCell $w={72} $pl={0} $plain>
      <svg width="43" height="34" viewBox="0 0 43 34" fill="#fff"><path d="M0 20h6v8H0zM12 12h6v16h-6zM24 6h6v22h-6zM36 0h7v28h-7z" /></svg>
    </HeadCell>
    <HeadCell $w={187} $pl={42} $gap={64}>
      <svg width="28" height="23" viewBox="0 0 28 23">
        <rect width="28" height="23" fill="#fff" />
        <path d="M0 1.600h28M0 5.200h28M0 8.800h28M0 12.400h28M0 16h28M0 21h28" stroke="#d81f2e" strokeWidth="1.900" />
        <rect width="15" height="13" fill="#3a4a94" />
        <path d="M1 2.500h13M1 5.500h13M1 8.500h13M1 11h13" stroke="#c9cde4" strokeWidth="1" strokeDasharray="1.500 1.500" />
      </svg>
      <Expand s={28} c="#eceded" />
    </HeadCell>
    <HeadCell $w={140} $pl={27}><Gear s={27} c="#e6e7e8" /><InfoText>Info</InfoText></HeadCell>
    <HeadCell $w={355} $pl={53}>
      <svg width="27" height="27" viewBox="0 0 27 27" fill="none" stroke="#eee" strokeWidth="2.800"><circle cx="13.500" cy="13.500" r="11.500" /><path d="M13.500 6v8l4.500 4" /></svg>
      <Elapsed>01:00:06</Elapsed>
      <ExitButton>EXIT</ExitButton>
    </HeadCell>
  </AppHeader>
);

const TICKS = [
  [1028.5, null], [1315.5, 'Nov 2013', 1266, 104], [1603, 'Apr 2015', 1554, 99],
  [1891, 'June 2015', 1837, 113], [2178, 'Dec 2015', 2125, 104],
];
const MODELS = [
  { name: ['DPM', 982, 1409, 75], fps: ['FPS: 0.5', 981, 1459, 94], map: ['mAP: 34.3', 972, 1488, 113] },
  { name: ['R-CNN', 1282, 1285, 110], fps: ['FPS: -', 1298, 1329, 70], map: ['mAP: 58.5', 1277, 1358, 113] },
  { name: ['Fast R-CNN', 1514, 1060, 186], fps: ['FPS: 0.5', 1563, 1108, 94], map: ['mAP: 70', 1563, 1137, 94] },
  { name: ['Faster R-CNN', 1791, 994, 215], fps: ['FPS: 7', 1856, 1040, 73], map: ['mAP: 73.2', 1837, 1069, 113] },
  { name: ['YOLO', 1838, 1163.5, 95], fps: ['FPS: 45', 1839, 1214, 88], map: ['mAP: 63.4', 1827, 1243, 112] },
  { name: ['SSD', 2122, 1028, 71], fps: ['FPS: 58', 2125, 1081, 88], map: ['mAP: 72.1', 2113, 1111, 112] },
];

const Label = ({ d, size }) => (
  <text x={d[1]} y={d[2]} fontSize={size} textLength={d[3]} lengthAdjust="spacingAndGlyphs" stroke="#1d1d1d" strokeWidth="0.6">{d[0]}</text>
);

const Chart = () => (
  <ChartSvg width="2122" height="769" viewBox="736 820 2122 769">
    <g stroke="#6b6b6b" strokeWidth="3">
      <path d="M875 862V1534" />
      <path d="M873 1532.500H2542" strokeWidth="3.500" />
      {TICKS.map(([x]) => <path key={x} d={`M${x} 1516V1550`} strokeWidth="2.500" />)}
    </g>
    <path d="M875 852l5 13h-10zM2551 1532.500l-13-5v10z" fill="#555" />
    <Label d={['mAP', 903, 866, 74]} size={33.5} />
    <Label d={['Time', 2391, 1567, 76]} size={34} />
    {TICKS.slice(1).map(([x, t, tx, w]) => <Label key={x} d={[t, tx, 1580, w]} size={24.5} />)}
    <rect x="1799" y="1122.500" width="174" height="147" fill="none" stroke="#fb4a53" strokeWidth="3" />
    {MODELS.map((m) => (
      <g key={m.name[0]}>
        <Label d={m.name} size={34} />
        <Label d={m.fps} size={25} />
        <Label d={m.map} size={25} />
      </g>
    ))}
  </ChartSvg>
);

const ROWS = [['YOLOv2 416 × 416', '76.8', '67'], ['YOLOv2 480 × 480', '77.8', '59'], ['YOLOv2 544 × 544', '78.6', '40']];

const PRESENTERS = [
  { name: 'Ha Nguyen', role: 'Organizer', color: '#fb4b20', h: 50 },
  { name: 'Kien Nguyen', role: 'Presenter', color: '#72c940', h: 50, audio: true },
  { name: 'Ngon Le', role: 'Presenter', color: '#72c940', h: 48 },
];

const Meeting = () => (
  <>
    <Header />
    <Notice>
      <svg width="26" height="26" viewBox="0 0 26 26"><circle cx="13" cy="13" r="13" fill="#1579a8" /><path d="M14 5.500h3l-.8 3h-3zM11.500 11h4l-2 8h2l-.5 1.500h-4l2-8h-2z" fill="#3aa8d8" /></svg>
      <span>You're attending a meeting organized with the trial version of Clickmeeting. Click <b>here</b> to start your own online meeting and webinars with Clickmeeting.</span>
    </Notice>
    <Body>
      <SideColumn>
        <Panel $h={486}>
          <PanelHead><PanelTitle>CAMERA AND VOICE</PanelTitle><Gear /><Expand /></PanelHead>
          <CameraView>
            <svg width="210" height="150" viewBox="0 0 210 150" fill="none" stroke="#333641" strokeWidth="7" strokeLinejoin="round"><path d="M5.500 5.500H142V60L204.500 21V131L142 90V144.500H5.500z" /></svg>
            <AudioLabel>Audio attendee:</AudioLabel>
            <NamePill>Kien Nguyen</NamePill>
          </CameraView>
        </Panel>
        <Panel $h={362}>
          <PanelHead><PanelTitle>ATTENDEE LIST</PanelTitle></PanelHead>
          <AttendeeList>
            <GroupRow><Triangle />PRESENTERS</GroupRow>
            {PRESENTERS.map((p) => (
              <Attendee key={p.name} $h={p.h}>
                <AttendeeMain><Person c={p.color} />{p.name}<Role>- {p.role}</Role></AttendeeMain>
                {p.audio && <AttendeeAudio><Speaker /></AttendeeAudio>}
              </Attendee>
            ))}
            <GroupRow><Triangle />PARTICIPANTS</GroupRow>
            <Attendee $h={10}><AttendeeMain /></Attendee>
            <Track $top={0} $h={233}><Thumb $y={4} $h={60} /></Track>
          </AttendeeList>
          <StatusBar>
            <svg width="25" height="25" viewBox="0 0 25 25" fill="none" stroke="#707983" strokeWidth="2.400"><circle cx="12.500" cy="12.500" r="11" /><path d="M6 13.500h13q0 6.500-6.500 6.500T6 13.500z" /><path d="M9 6.500v4M16 6.500v4" strokeWidth="2.800" /></svg>
          </StatusBar>
        </Panel>
        <Panel $h={360}>
          <PanelHead $pr={21}><PanelTitle>CHAT</PanelTitle><Translate>Translate</Translate><Gear /></PanelHead>
          <Messages>
            <p><b>Le Hoang Hiep:</b> Xin anh Kiên nhắc lại vì sao ResNet có nhiều lớp<br />mà vẫn cho ra kết quả tốt</p>
            <p><b>Le Hoang Hiep:</b> vì ban đầu anh có nói là nhiều lớp quá cũng<br />chưa hẳn là tốt nếu thuật toán học không tốt</p>
            <p><b>Le Hoang Hiep:</b> vâng, em đã rõ ạ</p>
            <p><b>Le Hoang Hiep:</b> cảm ơn anh Kiên :D</p>
            <Track $top={5} $h={230}><Thumb $y={172} $h={46} /></Track>
          </Messages>
          <Compose>
            <Placeholder>Write a message</Placeholder>
            <SendButton>SEND<svg width="24" height="20" viewBox="0 0 24 20"><path d="M17 1h6v9q0 4-4 4h-8v5L0 11l11-8v5h6z" fill="#fff" /></svg></SendButton>
          </Compose>
        </Panel>
        <Powered>Powered by <a>ClickMeeting.com</a> - Host your own webinar</Powered>
      </SideColumn>
      <Panel $w={2126} $h={1250}>
        <PanelHead><PanelTitle>SHARE</PanelTitle><Expand s={19} /></PanelHead>
        <Slide>
          <SlideTitle>YOLO – You Only Look Once</SlideTitle>
          <Bullets>
            <Bullet>Super fast (21~155 fps) with C/C++ implementation</Bullet>
            <Bullet>Only slightly worse performance than Faster R-CNN</Bullet>
          </Bullets>
          <Chart />
          <Callout>
            {ROWS.map(([name, map, fps], i) => (
              <React.Fragment key={name}>
                <span>{name}</span><span>2007+2012</span>{i === 2 ? <b>{map}</b> : <span>{map}</span>}<span>{fps}</span>
              </React.Fragment>
            ))}
          </Callout>
          <SlideFooter width="2122" height="24" viewBox="0 0 2122 24"><path d="M0 1H71V6H2027V1H2122V24H0z" fill="#67d39a" /></SlideFooter>
        </Slide>
      </Panel>
    </Body>
  </>
);

/* Dock icons share a 138 × 162 cell. */
const ICONS = {
  finder: (
    <g>
      <defs><linearGradient id="fa" x2="0" y2="1"><stop stopColor="#27cdfc" /><stop offset="1" stopColor="#2270ee" /></linearGradient><linearGradient id="fb" x2="0" y2="1"><stop stopColor="#f6f6f8" /><stop offset="1" stopColor="#d8e6f4" /></linearGradient></defs>
      <rect x="17" y="27" width="104" height="99" rx="5" fill="url(#fa)" />
      <path d="M71 27H116q5 0 5 5V121q0 5-5 5H79Q79 104 76 84H60Q60 54 71 27z" fill="url(#fb)" />
      <path d="M76 85H60Q60 54 71 27" fill="none" stroke="#16507c" strokeWidth="1.500" />
      <path d="M76 85Q79 104 79 126" fill="none" stroke="#16507c" strokeWidth="1" />
      <g stroke="#152029" strokeLinecap="round" fill="none" strokeWidth="4.500"><path d="M45 54v8M92 54v8" /><path d="M37 91Q69 119 100 91" strokeWidth="3.500" /></g>
    </g>
  ),
  launchpad: (
    <g>
      <defs><linearGradient id="la" x2="0" y2="1"><stop stopColor="#e8f6fb" /><stop offset="1" stopColor="#8b8e90" /></linearGradient><linearGradient id="lb" x2="0" y2="1"><stop stopColor="#bccbd1" /><stop offset="1" stopColor="#797877" /></linearGradient></defs>
      <circle cx="69" cy="77" r="57" fill="url(#la)" /><circle cx="69" cy="77" r="51.500" fill="url(#lb)" />
      <g fill="#3e4447"><path d="M103 43C84 44 72 54 63 70 48 64 37 71 29 81L47 82 45 90 58 99 60 97 65 116C76 107 79 98 78 87 94 77 104 62 103 43z" /><path d="M47 92C38 93 35 101 35 110 44 110 51 105 52 97L45 103z" /></g>
      <circle cx="82" cy="65" r="7" fill="#b3bfc4" />
    </g>
  ),
  itunes: (
    <g>
      <defs><radialGradient id="ia" cy=".6"><stop stopColor="#3aa9da" /><stop offset="1" stopColor="#2271b7" /></radialGradient></defs>
      <circle cx="69" cy="77" r="59" fill="#fff" /><circle cx="69" cy="77" r="53" fill="url(#ia)" />
      <path d="M51 44Q73 38 95 40V92Q95 104 83 104 72 104 72 93 72 82 87 82V61L60 64V99Q60 112 46 112 34 112 33 101 33 90 51 90z" fill="#fff" />
    </g>
  ),
  notes: (
    <g>
      <path d="M20 31 105 17 121 122 36 135z" fill="#fcfcfa" stroke="#a6925a" strokeWidth="1.500" />
      <path d="M19 30 105 17 108 35 22 48z" fill="#fdd03a" />
      {[0, 1, 2, 3, 4, 5, 6, 7, 8, 9, 10].map((i) => <path key={i} d={`M${25 + i * 1.100} ${57 + i * 6.900}l84-13`} stroke="#c6c6c6" strokeWidth="1.300" />)}
      <path d="M23 51l85-13" stroke="#8d8d8d" strokeDasharray="1.500 2.500" strokeWidth="1.300" />
    </g>
  ),
  prefs: (
    <g>
      <defs><linearGradient id="pa" x2="0" y2="1"><stop stopColor="#cfdfe6" /><stop offset="1" stopColor="#747575" /></linearGradient></defs>
      <rect x="13" y="24" width="112" height="106" rx="4" fill="url(#pa)" stroke="#76828a" strokeWidth="1" />
      <circle cx="69" cy="77" r="46" fill="#2b2b2c" />
      <circle cx="69" cy="77" r="37" fill="none" stroke="#b5b1ad" strokeWidth="7" strokeDasharray="4 3.750" />
      <circle cx="69" cy="77" r="30.500" fill="#3c3b3b" stroke="#a9a5a1" strokeWidth="7" />
      <circle cx="69" cy="77" r="28" fill="none" stroke="#7c7976" strokeWidth="2" />
      <path d="M69 77H98M69 77 55 51M69 77 55 103" stroke="#b3afab" strokeWidth="6" /><circle cx="69" cy="77" r="5" fill="#d2cfcc" stroke="#777" />
    </g>
  ),
  android: (
    <g>
      <circle cx="69" cy="71" r="54" fill="#8cc252" /><path d="M15 71a54 54 0 0 1 108 0z" fill="#81b64c" />
      <path d="M76 41 110 71H69z" fill="#6da03d" opacity=".6" />
      <path d="M47 88a25 25 0 0 0 57-17" fill="none" stroke="#f2f2f2" strokeWidth="10" />
      <path d="M57 76 25 125 25 137 36 126 69 84zM81 76 113 125 113 137 102 126 69 84z" fill="#efefef" />
      <path d="M62 41h14v10h7l3 6v16L76 80l-7 4-7-4-9-12V57l3-6h6z" fill="#6b6d6d" /><circle cx="69" cy="64" r="7.500" fill="#84ba4d" />
    </g>
  ),
  xcode: (
    <g>
      <defs><linearGradient id="xa" x2="0" y2="1"><stop stopColor="#45b4f8" /><stop offset="1" stopColor="#1a7cf4" /></linearGradient></defs>
      <path d="M7 47 108 31 127 114 21 132z" fill="url(#xa)" />
      <path d="M11 50 104 35 122 111 25 127z" fill="none" stroke="#bfe2ff" strokeWidth="1.500" />
      <g fill="none" stroke="#d4ecff" strokeWidth="1.600"><path d="M28 83 102 70 104 78 30 91z" /><path d="M55 46 62 44 102 98 104 104 96 101z" /><path d="M52 57l8 2-20 47-7 9 1-11z" /></g>
      <text x="96" y="114" fontFamily="Inter, sans-serif" fontSize="7.500" fill="#e6f4ff" transform="rotate(-9 96 114)">XCODE</text>
      <path d="M71 26Q84 12 106 19L116 27 128 25 129 38 118 40 108 33 103 37 98 40 93 36 97 30Q84 22 71 26z" fill="#c2c4c6" stroke="#75787b" strokeWidth="1" />
      <path d="M96 32 104 35 95 68 89 67z" fill="#dfe0e1" stroke="#8b8e90" strokeWidth="0.8" />
      <path d="M87 65 96 67 84 130Q82 134 77 133 70 131 71 126z" fill="#1c1c1e" />
    </g>
  ),
  sketch: (
    <g>
      <path d="M33 24 69 20 105 24 131 61 69 134 7 61z" fill="#fda726" />
      <path d="M33 24 69 20 33 61zM105 24 69 20 105 61z" fill="#fdc52c" /><path d="M33 24 7 61H33zM105 24l26 37H105z" fill="#fba01e" />
      <path d="M69 20 33 61h72z" fill="#fde68c" /><path d="M7 61H33L69 134z" fill="#f36f21" /><path d="M131 61H105L69 134z" fill="#f36f21" />
      <path d="M7 61H131" stroke="#ffe06a" strokeWidth="1.500" />
    </g>
  ),
  vmware: (
    <g>
      <defs><linearGradient id="va" x2="0" y2="1"><stop stopColor="#3f9be0" /><stop offset="1" stopColor="#125a9e" /></linearGradient><linearGradient id="vb" x2="0" y2="1"><stop stopColor="#fa5456" /><stop offset="1" stopColor="#c81a1e" /></linearGradient></defs>
      <path d="M20 18H84Q94 18 94 28V90L84 66V39H31V82H62L79 103H20Q10 103 10 93V28Q10 18 20 18z" fill="url(#va)" fillRule="evenodd" />
      <path d="M57 51H117Q127 51 127 61V126Q127 136 117 136H53Q43 136 43 126V103H64V115H107V71H74z" fill="url(#vb)" />
      <path d="M43 82V65L57 82z" fill="#ee3a40" />
    </g>
  ),
  chrome: (
    <g>
      <circle cx="69" cy="77" r="59" fill="#fdca4c" />
      <path d="M18 47A59 59 0 0 1 122 50H69Q48 50 43 73z" fill="#dc4a40" />
      <path d="M18 47A59 59 0 0 0 67 136L90 93Q69 110 48 93z" fill="#23a05c" />
      <circle cx="69" cy="77" r="27" fill="#f3f3f3" /><circle cx="69" cy="77" r="22" fill="#4c8cf2" />
    </g>
  ),
  sourcetree: (
    <g>
      <defs><linearGradient id="sa" x2="0" y2="1"><stop stopColor="#1268ff" /><stop offset="1" stopColor="#0b50c6" /></linearGradient></defs>
      <circle cx="69" cy="77" r="57" fill="url(#sa)" />
      <circle cx="69" cy="73" r="16.500" fill="none" stroke="#fff" strokeWidth="16" /><path d="M93 73A25 25 0 0 1 78 95L74 85A12 12 0 0 0 81 77z" fill="#8fb8f8" opacity=".8" />
      <path d="M62 90H77V108Q77 110 75 110H64Q62 110 62 108z" fill="#fff" />
    </g>
  ),
  vs: <CodeIcon a="#b57bf0" b="#7a4fb8" closed />,
  code: <CodeIcon a="#3fa3e4" b="#1571b8" />,
};

function CodeIcon({ a, b, closed }) {
  return (
    <g>
      <path d="M18 33Q18 31 20 30L102 17Q104 17 104 20L120 121Q120 123 118 124L37 135Q35 135 35 133z" fill="#2d2c30" />
      <path d="M94 27 117 33 129 104 109 117z" fill={a} />
      <path d="M94 27 117 33 129 104 109 117z" fill={b} opacity=".25" />
      <path d="M36 105 107 105 109 117z" fill={b} />
      <path d="M34 62 40 61 88 86 81 95z" fill={a} /><path d="M34 62 40 61 88 86 81 95z" fill={b} opacity=".5" />
      <path d="M72 44 84 47 44 89 38 88z" fill={a} />
      <path d="M77 50 84 47 91 87 81 95 79 81z" fill={b} />
      {closed && <path d="M34 62 38 88 43 86 38 64z" fill={b} />}
    </g>
  );
}

const DOCK = [['finder', true], ['launchpad'], ['itunes'], ['notes'], ['prefs'], ['android'], ['xcode'], ['sketch'], ['vmware'], ['chrome', true], ['sourcetree'], ['vs'], ['code']];

const DockIcon = styled.svg`
  width: 138px;
  height: 162px;
  filter: drop-shadow(0 2px 2px rgba(0, 0, 0, 0.3));
`;

const DockBar = () => (
  <Dock>
    {DOCK.map(([id, running]) => (
      <DockIcon key={id} viewBox="0 0 138 162">
        {ICONS[id]}
        {running && <circle cx="69" cy="154" r="4" fill="#2c2c2a" />}
      </DockIcon>
    ))}
    <Divider />
    <DockIcon viewBox="0 0 138 162">
      <defs><linearGradient id="ta"><stop stopColor="#c9cbcb" /><stop offset=".3" stopColor="#e6e5e4" /><stop offset=".7" stopColor="#dedddc" /><stop offset="1" stopColor="#c3c6c6" /></linearGradient></defs>
      <ellipse cx="69" cy="32" rx="45" ry="10" fill="#b5bcbc" stroke="#e8e8e8" strokeWidth="1.500" />
      <path d="M30 36 28 26 40 22 52 15 60 22 78 16 88 24 100 21 108 36 90 42 50 42z" fill="#e7e7e5" />
      <path d="M38 30l12-8 6 12-10 6zM80 24l14 4-8 12-10-2z" fill="#6b6a68" /><path d="M52 28l12-2-4 6z" fill="#3cb6d6" /><path d="M58 32l4 8 4-8z" fill="#7bb84a" /><path d="M76 32l8-8 4 8z" fill="#2b5a9c" /><path d="M72 36l8-4v8zM90 36l6-6v8z" fill="#c4572d" /><path d="M46 36l10 2-4 4z" fill="#5c2430" />
      <path d="M24 33Q69 50 114 33L104 124Q102 135 69 135T34 124z" fill="url(#ta)" opacity=".93" />
      <path d="M56 52Q76 66 84 46Q74 54 56 52z" fill="#f2f2f2" />
    </DockIcon>
  </Dock>
);

export default function App() {
  return (
    <Desktop>
      <GlobalStyle />
      <Wood width="2880" height="170">
        <filter id="grain"><feTurbulence type="fractalNoise" baseFrequency="0.08 0.04" numOctaves="4" seed="4" /><feColorMatrix values="0 0 0 0 .2  0 0 0 0 .2  0 0 0 0 .2  0.900 0 0 0 -.33" /></filter>
        <rect width="2880" height="170" filter="url(#grain)" />
      </Wood>
      <SystemMenu />
      <BrowserWindow>
        <Chrome />
        <Meeting />
      </BrowserWindow>
      <DockBar />
    </Desktop>
  );
}
